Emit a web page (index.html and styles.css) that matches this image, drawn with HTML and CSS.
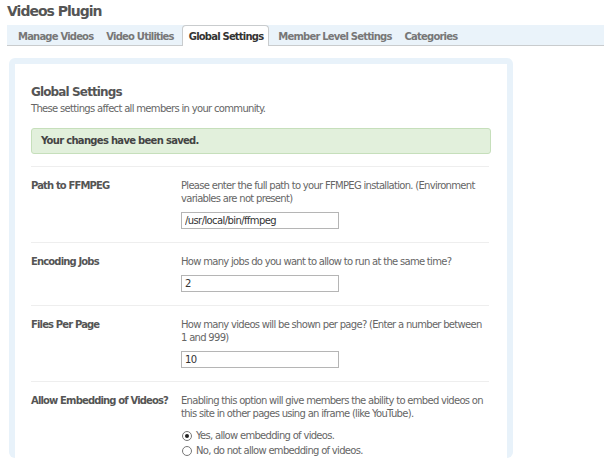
FILE: index.html
```html
<!DOCTYPE html>
<html>
<head>
<meta charset="utf-8">
<link rel="stylesheet" href="styles.css">
</head>
<body>
<h1 class="page-title">Videos Plugin</h1>
<div class="tabs">
  <a class="tab">Manage Videos</a>
  <a class="tab">Video Utilities</a>
  <a class="tab active">Global Settings</a>
  <a class="tab">Member Level Settings</a>
  <a class="tab">Categories</a>
</div>
<div class="panel">
  <div class="panel-inner">
    <h2 class="section-title">Global Settings</h2>
    <p class="section-desc">These settings affect all members in your community.</p>
    <div class="success">Your changes have been saved.</div>

    <div class="row">
      <div class="label">Path to FFMPEG</div>
      <div class="field">
        <p class="desc">Please enter the full path to your FFMPEG installation. (Environment<br>variables are not present)</p>
        <input class="text" type="text" value="/usr/local/bin/ffmpeg">
      </div>
    </div>
    <div class="row">
      <div class="label">Encoding Jobs</div>
      <div class="field">
        <p class="desc">How many jobs do you want to allow to run at the same time?</p>
        <input class="text" type="text" value="2">
      </div>
    </div>
    <div class="row">
      <div class="label">Files Per Page</div>
      <div class="field">
        <p class="desc">How many videos will be shown per page? (Enter a number between<br>1 and 999)</p>
        <input class="text" type="text" value="10">
      </div>
    </div>
    <div class="row">
      <div class="label">Allow Embedding of Videos?</div>
      <div class="field">
        <p class="desc">Enabling this option will give members the ability to embed videos on<br>this site in other pages using an iframe (like YouTube).</p>
        <div class="radios">
          <label class="radio"><span class="dot checked"></span>Yes, allow embedding of videos.</label>
          <label class="radio"><span class="dot"></span>No, do not allow embedding of videos.</label>
        </div>
      </div>
    </div>
  </div>
</div>
</body>
</html>
```
FILE: styles.css
```css
* { box-sizing: border-box; }
html, body { margin: 0; padding: 0; background: #fff; }
body {
  font-family: "DejaVu Sans", Verdana, sans-serif;
  font-size: 10px;
  color: #555;
  padding: 0 0 0 7px;
  overflow: hidden;
  height: 459px;
}
.page-title {
  margin: 0;
  padding-top: 2px;
  height: 25px;
  font-size: 14px;
  font-weight: bold;
  color: #555;
  letter-spacing: -1px;
  line-height: 18px;
}
.tabs {
  display: flex;
  align-items: flex-end;
  height: 21px;
  background: #eaf3fa;
  border-bottom: 1px solid #c9ccce;
  padding-left: 4px;
}
.tab {
  display: block;
  font-weight: bold;
  color: #777;
  font-size: 10px;
  letter-spacing: -0.8px;
  padding: 0 6px 2px 7px;
  line-height: 12px;
}
.tab.active {
  background: #fff;
  color: #333;
  border: 1px solid #c9ccce;
  border-bottom: none;
  border-radius: 4px 4px 0 0;
  margin-bottom: -1px;
  padding: 5px 5px 3px 6px;
  margin-left: 2px;
  margin-right: 2px;
}
.panel {
  margin-top: 12px;
  margin-left: 2px;
  width: 504px;
  background: #e8f2fa;
  border-radius: 6px;
  padding: 6px 6px 0 6px;
  height: 400px;
}
.panel-inner {
  background: #fff;
  height: 100%;
  padding: 16px 16px 0 16px;
}
.section-title {
  margin: 0;
  font-size: 12px;
  font-weight: bold;
  color: #555;
  letter-spacing: -0.87px;
  line-height: 14px;
  padding-top: 5px;
}
.section-desc {
  margin: 3px 0 0 0;
  line-height: 13px;
  letter-spacing: -0.68px;
  color: #666;
}
.success {
  margin-top: 13px;
  height: 26px;
  background: #e2f0dc;
  border: 1px solid #c6dfbb;
  border-radius: 3px;
  padding-left: 9px;
  line-height: 24px;
  font-weight: bold;
  color: #444;
  letter-spacing: -0.7px;
}
.row {
  display: flex;
  border-top: 1px solid #eee;
  margin-top: 12px;
  padding-top: 12px;
  width: 458px;
}
.row + .row { margin-top: 0; }
.row .field { padding-bottom: 13px; }
.label {
  width: 150px;
  flex: none;
  font-weight: bold;
  color: #555;
  letter-spacing: -0.85px;
  line-height: 13px;
  white-space: nowrap;
}
.field { width: 320px; flex: none; }
.desc {
  margin: 0;
  line-height: 13px;
  color: #666;
  letter-spacing: -0.7px;
  white-space: nowrap;
}
.text {
  display: block;
  margin-top: 7px;
  width: 158px;
  height: 17px;
  border: 1px solid #b5b5b5;
  padding: 0 3px;
  font-family: inherit;
  font-size: 10px;
  color: #333;
  letter-spacing: -0.6px;
}
.radios { margin-top: 8px; }
.radio {
  display: flex;
  align-items: center;
  line-height: 15px;
  color: #666;
  letter-spacing: -0.7px;
}
.dot {
  width: 10px;
  height: 10px;
  border: 1px solid #777;
  border-radius: 50%;
  margin: 0 4px 0 1px;
  position: relative;
  background: #fff;
}
.dot.checked::after {
  content: "";
  position: absolute;
  left: 2px; top: 2px;
  width: 4px; height: 4px;
  border-radius: 50%;
  background: #222;
}
```
